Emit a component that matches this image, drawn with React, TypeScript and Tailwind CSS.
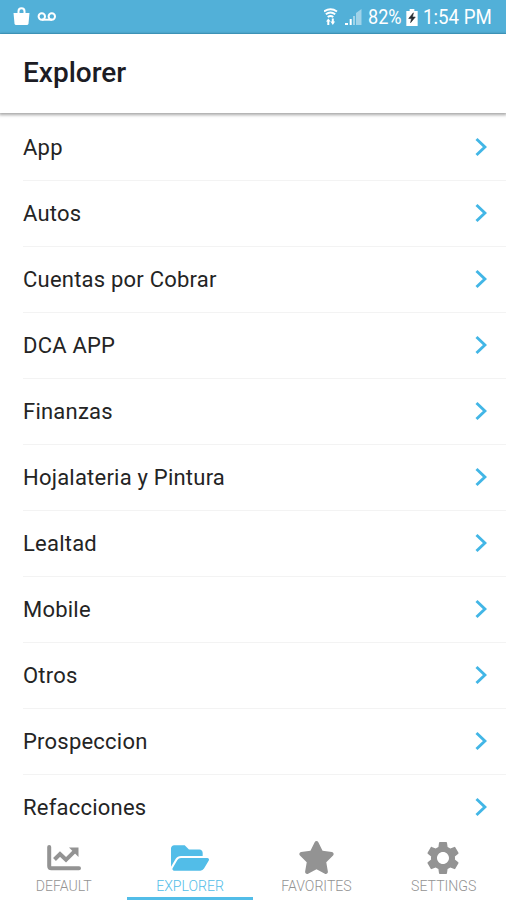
import React from "react";
import { FaFolderOpen, FaStar } from "react-icons/fa";
import { MdSettings } from "react-icons/md";

const folders = [
  "App",
  "Autos",
  "Cuentas por Cobrar",
  "DCA APP",
  "Finanzas",
  "Hojalateria y Pintura",
  "Lealtad",
  "Mobile",
  "Otros",
  "Prospeccion",
  "Refacciones",
];

function StatusBar() {
  return (
    <div className="flex h-[34px] shrink-0 items-center border-b border-[#46a9d2] bg-[#52b0d8] pr-[14px] pl-[13px] text-white">
      <svg width="17" height="19" viewBox="0 0 17 19" fill="none">
        <path d="M.5 6h16l-1 10.500q-.2 1.500-1.700 1.500H3.200Q1.700 18 1.500 16.500z" fill="currentColor" />
        <path d="M5.500 7V4.200a3 3 0 0 1 6 0V7" stroke="currentColor" strokeWidth="2" />
      </svg>
      <svg className="ml-[7px]" width="20" height="10" viewBox="0 0 20 10" fill="none" stroke="currentColor" strokeWidth="2">
        <circle cx="4.800" cy="4.500" r="3.200" />
        <circle cx="14.800" cy="4.500" r="3.200" />
        <path d="M5 7.700h10" />
      </svg>
      <div className="ml-auto flex items-center pt-px">
        <svg width="17" height="18" viewBox="0 0 17 18" fill="none" stroke="currentColor">
          <path d="M0 3.500q6.500-4.500 13 0M1.800 6.300q4.700-3.500 9.400 0M3.700 9q2.800-2.200 5.600 0" strokeWidth="1.900" />
          <path d="M2 13.500l2.300-3 2.300 3H5.300V17H3.300v-3.500zM6.500 13.500h1.300v-3h2v3h1.300l-2.300 3.500z" fill="currentColor" stroke="none" />
        </svg>
        <svg className="ml-[4px]" width="17" height="17" viewBox="0 0 17 17" fill="currentColor">
          <path d="M0 14h3v2H0zM4.700 10h2v6h-2z" />
          <path d="M8 7h2v9H8zM11 4l5.500-4v16H11z" opacity=".45" />
        </svg>
        <span className="ml-[6px] w-[35px] pt-px text-[21px] leading-none whitespace-nowrap">
          <span className="inline-block origin-left scale-x-[0.860]">82%</span>
        </span>
        <svg className="ml-[3px]" width="12" height="17" viewBox="0 0 12 18">
          <path d="M3.500 0h5v2H12v16H0V2h3.500z" fill="white" />
          <path d="M7.500 4L2.500 10h3L4.500 14.500l5-6h-3z" fill="#252b30" stroke="#252b30" strokeWidth=".6" />
        </svg>
        <span className="ml-[5px] w-[69px] pt-px text-[21px] leading-none whitespace-nowrap">
          <span className="inline-block origin-left scale-x-[0.890]">1:54 PM</span>
        </span>
      </div>
    </div>
  );
}

function Chevron() {
  return (
    <svg className="mb-[2px]" width="13" height="20" viewBox="0 0 13 20" fill="none" stroke="#42b6e6" strokeWidth="2.900">
      <path d="M1.500 2L9.900 10l-8.400 8" />
    </svg>
  );
}

function ChartIcon() {
  return (
    <svg width="36" height="26" viewBox="0 0 36 26" fill="none" stroke="currentColor">
      <path d="M3.200 2v19q0 2.200 2.200 2.200H33" strokeWidth="4" strokeLinecap="round" />
      <path d="M8.500 14.500l5.500-5.500 6 5.800 9-9" strokeWidth="4" />
      <path d="M23 2.500h9.500V12z" fill="currentColor" stroke="none" />
    </svg>
  );
}

const tabs = [
  { label: "DEFAULT", icon: <ChartIcon />, active: false },
  { label: "EXPLORER", icon: <FaFolderOpen size={38} />, active: true },
  { label: "FAVORITES", icon: <FaStar size={37} />, active: false },
  { label: "SETTINGS", icon: <MdSettings size={40} />, active: false },
];

export default function App() {
  return (
    <div className="flex h-[900px] w-[506px] flex-col overflow-hidden bg-white font-['Roboto',sans-serif]">
      <StatusBar />
      <header className="relative flex h-[79px] shrink-0 items-center bg-white pb-[2px] pl-[23px] shadow-[0_1px_3px_1px_rgba(0,0,0,0.35)]">
        <h1 className="text-[28px] leading-none font-medium text-[#1c1c24]">Explorer</h1>
      </header>
      <ul className="min-h-0 flex-1 overflow-hidden pl-[23px] pt-[2px]">
        {folders.map((name) => (
          <li key={name} className="flex h-[66px] items-center justify-between border-b border-[#f3f3f3] pr-[18px] last:border-transparent">
            <span className="pt-px text-[22px] leading-none tracking-[0.220px] text-[#242424]">{name}</span>
            <Chevron />
          </li>
        ))}
      </ul>
      <nav className="grid h-[66px] shrink-0 grid-cols-4 bg-white">
        {tabs.map((tab) => (
          <div
            key={tab.label}
            className={
              tab.active
                ? "flex flex-col items-center border-b-[3px] border-[#52bde8] text-[#52bde8]"
                : "flex flex-col items-center border-b-[3px] border-transparent pl-px text-[#939393]"
            }
          >
            <div className="mt-[4px] flex h-[39px] items-center">{tab.icon}</div>
            <span className="mt-[2px] scale-x-[0.940] text-[15px] leading-none font-light">{tab.label}</span>
          </div>
        ))}
      </nav>
    </div>
  );
}
